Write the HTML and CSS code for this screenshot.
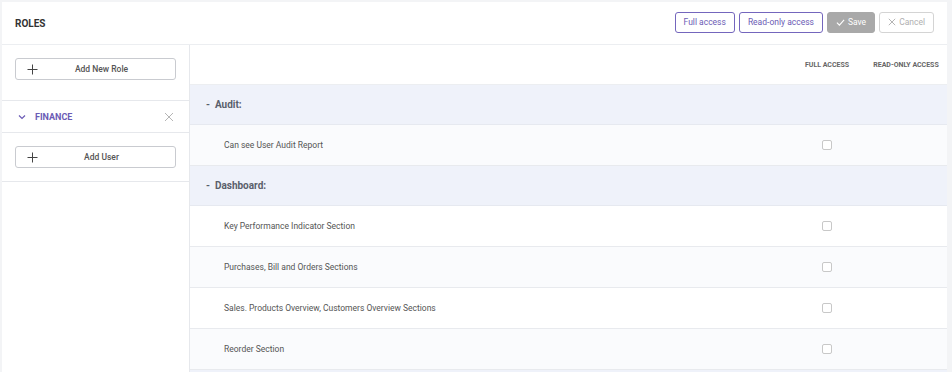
FILE: index.html
```html
<!DOCTYPE html>
<html>
<head>
<meta name="viewport" content="width=device-width, initial-scale=1">
<link rel="stylesheet" href="styles.css">
</head>
<body>

<div class="card">
  <div class="topbar">
    <h1 class="title">ROLES</h1>
    <div class="actions">
      <button class="btn btn-outline">Full access</button>
      <button class="btn btn-outline">Read-only access</button>
      <button class="btn btn-save">
        <svg width="9" height="9" viewBox="0 0 10 10"><path d="M1 5.2 L3.8 8 L9 2" fill="none" stroke="#fff" stroke-width="1.2"/></svg>
        Save
      </button>
      <button class="btn btn-cancel">
        <svg width="8" height="8" viewBox="0 0 10 10"><path d="M1 1 L9 9 M9 1 L1 9" fill="none" stroke="#aaa" stroke-width="1.1"/></svg>
        Cancel
      </button>
    </div>
  </div>

  <div class="main">
    <!-- roles list -->
    <div class="sidebar">
      <div class="side-block">
        <button class="add-btn">
          <svg class="plus" width="11" height="11" viewBox="0 0 11 11"><path d="M5.5 0.5 V10.5 M0.5 5.5 H10.5" fill="none" stroke="#444" stroke-width="1"/></svg>
          <span class="add-text">Add New Role</span>
        </button>
      </div>
      <div class="role-row">
        <svg class="chev" width="8" height="6" viewBox="0 0 8 6"><path d="M1 1.5 L4 4.5 L7 1.5" fill="none" stroke="#6b5bb5" stroke-width="1.2"/></svg>
        <span class="role-name">FINANCE</span>
        <svg class="close" width="10" height="10" viewBox="0 0 10 10"><path d="M1 1 L9 9 M9 1 L1 9" fill="none" stroke="#b5b5b5" stroke-width="1"/></svg>
      </div>
      <div class="side-block">
        <button class="add-btn">
          <svg class="plus" width="11" height="11" viewBox="0 0 11 11"><path d="M5.5 0.5 V10.5 M0.5 5.5 H10.5" fill="none" stroke="#444" stroke-width="1"/></svg>
          <span class="add-text">Add User</span>
        </button>
      </div>
    </div>

    <!-- permissions table -->
    <div class="perms">
      <div class="perm-head">
        <span></span>
        <span class="col-title">FULL ACCESS</span>
        <span class="col-title">READ-ONLY ACCESS</span>
      </div>

      <div class="group">- &nbsp;Audit:</div>
      <div class="item alt">
        <span>Can see User Audit Report</span>
        <span class="cell"><span class="check"></span></span>
        <span class="cell"></span>
      </div>

      <div class="group">- &nbsp;Dashboard:</div>
      <div class="item">
        <span>Key Performance Indicator Section</span>
        <span class="cell"><span class="check"></span></span>
        <span class="cell"></span>
      </div>
      <div class="item alt">
        <span>Purchases, Bill and Orders Sections</span>
        <span class="cell"><span class="check"></span></span>
        <span class="cell"></span>
      </div>
      <div class="item">
        <span>Sales. Products Overview, Customers Overview Sections</span>
        <span class="cell"><span class="check"></span></span>
        <span class="cell"></span>
      </div>
      <div class="item alt">
        <span>Reorder Section</span>
        <span class="cell"><span class="check"></span></span>
        <span class="cell"></span>
      </div>
      <div class="group"></div>
    </div>
  </div>
</div>

</body>
</html>
```

FILE: styles.css
```css
* {box-sizing: border-box;}

body {
  margin: 0;
  padding: 2px 5px 0 2px;
  background: #f3f4f6;
  font-family: Roboto, "Liberation Sans", sans-serif;
  color: #555;
  overflow: hidden;
}

button {font-family: inherit; cursor: pointer;}

.card {
  background: white;
  height: 400px;
}

/* Top bar with title and action buttons */
.topbar {
  height: 43px;
  display: flex;
  align-items: center;
  justify-content: space-between;
  padding: 0 13px;
  border-bottom: 1px solid #eceef1;
}

.title {
  margin: 0;
  font-size: 10px;
  font-weight: 700;
  color: #333;
}

.actions {
  display: flex;
  gap: 4px;
  margin-top: -2px;
}

.btn {
  height: 21px;
  padding: 0 8px;
  border-radius: 3px;
  font-size: 8.5px;
  display: flex;
  align-items: center;
  gap: 3px;
  background: white;
}

.btn-outline {
  border: 1px solid #7466bd;
  color: #6b5bb5;
}

.btn-save {
  border: 1px solid #a9a9a9;
  background: #a9a9a9;
  color: white;
}

.btn-cancel {
  border: 1px solid #d4d4d4;
  color: #b0b0b0;
}

.main {
  display: flex;
}

/* Roles list on the left */
.sidebar {
  width: 188px;
  border-right: 1px solid #e6e8ec;
  height: 400px;
}

.side-block {
  padding: 13px;
  border-bottom: 1px solid #e6e8ec;
}

.side-block:first-child {
  padding-bottom: 20px;
}

.add-btn {
  width: 100%;
  height: 22px;
  display: flex;
  align-items: center;
  padding: 0 10px 0 11px;
  border: 1px solid #c9cbd0;
  border-radius: 3px;
  background: white;
  color: #555;
  font-size: 8.5px;
  font-weight: 500;
}

.plus {
  flex: none;
}

.add-text {
  flex: 1;
  text-align: center;
}

.role-row {
  height: 32px;
  display: flex;
  align-items: center;
  padding: 0 15px 0 16px;
  border-bottom: 1px solid #e6e8ec;
}

.chev {margin-right: 9px;}

.role-name {
  flex: 1;
  font-size: 9px;
  font-weight: 700;
  color: #6b5bb5;
}

/* Permission table */
.perms {
  flex: 1;
}

.perm-head, .item {
  display: grid;
  grid-template-columns: 1fr 76px 82px;
  align-items: center;
}

.perm-head {
  height: 40px;
  border-bottom: 1px solid #eceef1;
}

.col-title {
  font-size: 7px;
  font-weight: 700;
  color: #666;
  text-align: center;
  white-space: nowrap;
}

.group {
  height: 40px;
  display: flex;
  align-items: center;
  padding-left: 16px;
  background: #eff2fa;
  border-bottom: 1px solid #e6e9f0;
  font-size: 10px;
  font-weight: 700;
  color: #5a5f6b;
}

.item {
  height: 41px;
  padding-left: 34px;
  background: white;
  border-bottom: 1px solid #e8eaee;
  font-size: 8.5px;
  color: #555;
}

.item.alt {background: #fafbfd;}

.cell {
  display: flex;
  justify-content: center;
}

.check {
  width: 10px;
  height: 10px;
  border: 1px solid #c8c8c8;
  border-radius: 2px;
  background: white;
}
```
